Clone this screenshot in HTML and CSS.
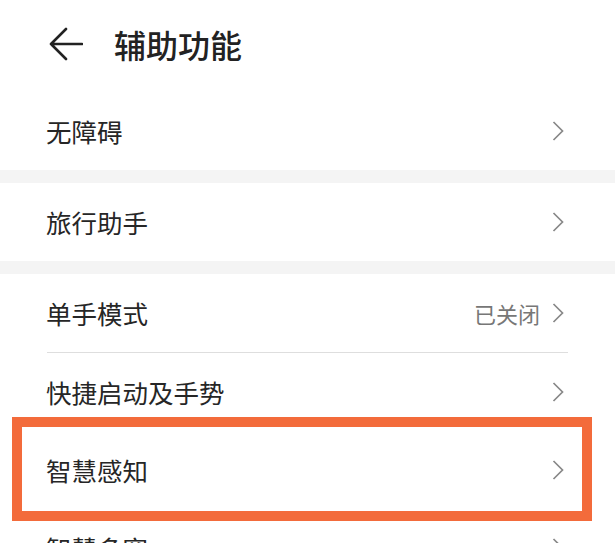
FILE: index.html
```html
<!DOCTYPE html>
<html lang="zh-CN">
<head>
    <meta charset="UTF-8">
    <meta name="viewport" content="width=device-width, initial-scale=1.0">
    <title>辅助功能</title>
    <link rel="stylesheet" href="styles.css">
</head>
<body>
    <div class="page">
        <!-- Header -->
        <div class="header">
            <svg class="back" width="34" height="34" viewBox="0 0 34 34">
                <path d="M17 2 L2 17 L17 32 M2 17 L33 17" fill="none" stroke="#222" stroke-width="2.6" stroke-linecap="round" stroke-linejoin="round"/>
            </svg>
            <h1>辅助功能</h1>
        </div>

        <div class="row">
            <span class="label">无障碍</span>
            <span class="right"><svg class="chev" width="12" height="20" viewBox="0 0 12 20"><path d="M1.5 1 L10.5 10 L1.5 19" fill="none" stroke="#888" stroke-width="1.7"/></svg></span>
        </div>
        <div class="band"></div>

        <div class="row">
            <span class="label">旅行助手</span>
            <span class="right"><svg class="chev" width="12" height="20" viewBox="0 0 12 20"><path d="M1.5 1 L10.5 10 L1.5 19" fill="none" stroke="#888" stroke-width="1.7"/></svg></span>
        </div>
        <div class="band"></div>

        <div class="row">
            <span class="label">单手模式</span>
            <span class="right"><span class="value">已关闭</span><svg class="chev" width="12" height="20" viewBox="0 0 12 20"><path d="M1.5 1 L10.5 10 L1.5 19" fill="none" stroke="#888" stroke-width="1.7"/></svg></span>
        </div>
        <div class="divider"></div>

        <div class="row">
            <span class="label">快捷启动及手势</span>
            <span class="right"><svg class="chev" width="12" height="20" viewBox="0 0 12 20"><path d="M1.5 1 L10.5 10 L1.5 19" fill="none" stroke="#888" stroke-width="1.7"/></svg></span>
        </div>

        <div class="row">
            <span class="label">智慧感知</span>
            <span class="right"><svg class="chev" width="12" height="20" viewBox="0 0 12 20"><path d="M1.5 1 L10.5 10 L1.5 19" fill="none" stroke="#888" stroke-width="1.7"/></svg></span>
        </div>

        <div class="row">
            <span class="label">智慧多窗</span>
            <span class="right"><svg class="chev" width="12" height="20" viewBox="0 0 12 20"><path d="M1.5 1 L10.5 10 L1.5 19" fill="none" stroke="#888" stroke-width="1.7"/></svg></span>
        </div>

        <!-- highlight marker drawn over the list -->
        <div class="highlight"></div>
    </div>
</body>
</html>
```

FILE: styles.css
```css
body {
    margin: 0;
    padding: 0;
    background: #fff;
    font-family: "Noto Sans CJK SC", "Noto Sans", sans-serif;
    color: #222;
}

.page {
    position: relative;
    width: 615px;
    height: 543px;
    overflow: hidden;
}

.header {
    display: flex;
    align-items: center;
    height: 92px;
    padding-left: 49px;
    box-sizing: border-box;
    padding-bottom: 4px;
}

.back {
    margin-right: 31px;
}

.header h1 {
    margin: 0;
    font-size: 32px;
    font-weight: 500;
    line-height: 1;
    color: #222;
}

.row {
    display: flex;
    justify-content: space-between;
    align-items: center;
    height: 78px;
    padding: 0 51px 0 46px;
}

.label {
    font-size: 25.5px;
    line-height: 1;
    color: #262626;
}

.right {
    display: flex;
    align-items: center;
}

.value {
    font-size: 22px;
    color: #777;
    margin-right: 12px;
}

.chev {
    display: block;
}

.band {
    height: 13px;
    background: #f4f4f4;
}

.divider {
    height: 1px;
    margin: 0 47px;
    background: #dedede;
}

.highlight {
    position: absolute;
    left: 12px;
    top: 417px;
    width: 580px;
    height: 104px;
    box-sizing: border-box;
    border: 10px solid #f36b3b;
}
```
